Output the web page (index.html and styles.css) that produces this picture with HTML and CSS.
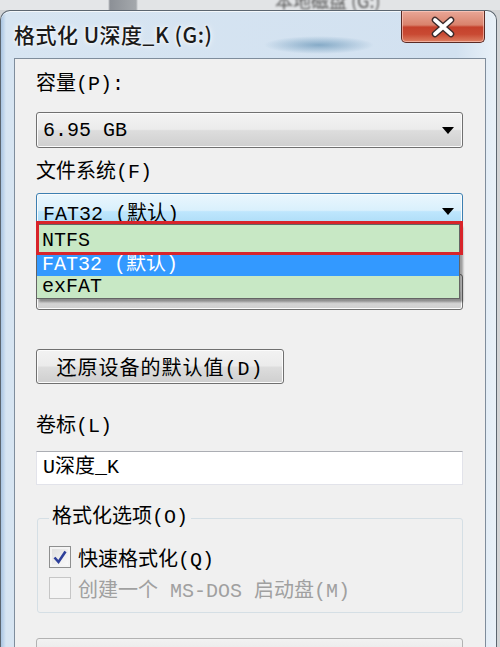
FILE: index.html
```html
<!DOCTYPE html>
<html lang="zh-CN">
<head>
    <meta charset="UTF-8">
    <title>格式化 U深度_K (G:)</title>
    <link rel="stylesheet" href="styles.css">
</head>
<body>

    <div class="desk"><span>本地磁盘 (G:)</span></div>

    <div class="window">
        <div class="titlebar">
            <h1>格式化 U深度_K (G:)</h1>
            <button class="close" aria-label="关闭">
                <svg width="28" height="22" viewBox="0 0 28 22">
                    <path d="M6 4 L22 18 M22 4 L6 18" stroke="#3a2a2a" stroke-width="6.5" stroke-linecap="round"/>
                    <path d="M6 4 L22 18 M22 4 L6 18" stroke="#fff" stroke-width="3.8" stroke-linecap="round"/>
                </svg>
            </button>
        </div>

        <div class="client">
            <p class="label">容量(P):</p>
            <div class="combo">
                <span>6.95 GB</span>
                <i class="arrow"></i>
            </div>

            <p class="label label-fs">文件系统(F)</p>
            <div class="combo-wrap">
                <div class="combo combo-open">
                    <span>FAT32 (默认)</span>
                    <i class="arrow"></i>
                </div>
                <ul class="dropdown">
                    <li class="row-first">NTFS</li>
                    <li class="selected">FAT32 (默认)</li>
                    <li>exFAT</li>
                </ul>
                <div class="mark"></div>
            </div>

            <!-- covered by the open list -->
            <p class="label label-unit covered">分配单元大小(A)</p>
            <div class="combo combo-unit">
                <span class="covered">4096 字节</span>
                <i class="arrow covered"></i>
            </div>

            <button class="btn">还原设备的默认值(D)</button>

            <p class="label label-vol">卷标(L)</p>
            <div class="textbox">U深度_K</div>

            <fieldset class="group">
                <legend>格式化选项(O)</legend>
                <label class="check">
                    <span class="box checked">
                        <svg width="16" height="16" viewBox="0 0 16 16">
                            <path d="M2.5 8.5 L6.5 13 L13.5 2.5" fill="none" stroke="#2d3f9a" stroke-width="2.6"/>
                        </svg>
                    </span>
                    快速格式化(Q)
                </label>
                <label class="check disabled">
                    <span class="box"></span>
                    创建一个 MS-DOS 启动盘(M)
                </label>
            </fieldset>

            <div class="progress"></div>
        </div>
    </div>

</body>
</html>
```

FILE: styles.css
```css
* {
    margin: 0;
    padding: 0;
    box-sizing: border-box;
}

body {
    width: 500px;
    height: 647px;
    overflow: hidden;
    background: #d2d4d6;
    font-family: 'Liberation Mono', 'Noto Sans CJK SC', monospace;
    font-size: 20px;
    color: #000;
}

.desk {
    height: 10px;
    overflow: hidden;
    background: linear-gradient(90deg, #e4e6e8 0, #e4e6e8 108px, #8c9096 110px, #a4a8ac 136px, #e2e4e6 138px);
}

.desk span {
    display: block;
    margin: -13px 0 0 275px;
    font-family: 'Noto Sans CJK SC', sans-serif;
    font-size: 18px;
    color: #555;
    filter: blur(1px);
}

.window {
    width: 497px;
    height: 637px;
    display: flex;
    flex-direction: column;
    padding: 0 10px 0 13px;
    border: 1px solid #5c6670;
    border-bottom: none;
    border-radius: 10px 10px 0 0;
    background:
        radial-gradient(ellipse 55px 9px at 318px 34px, rgba(70, 125, 165, 0.55), transparent),
        linear-gradient(90deg, #a8c4e2 0, #d7e5f2 5px, #d2e1f0 92%, #e9f1f8 100%);
    box-shadow: inset 0 1px 0 #f4f8fb;
}

.titlebar {
    height: 47px;
    display: flex;
    align-items: flex-start;
    justify-content: space-between;
    flex-shrink: 0;
}

.titlebar h1 {
    margin-top: 8px;
    font-family: 'Noto Sans CJK SC', sans-serif;
    font-size: 21px;
    font-weight: 500;
    letter-spacing: 0.5px;
    color: #1a1a1a;
    text-shadow: 0 0 6px #fff, 0 0 3px #fff;
}

.close {
    width: 84px;
    height: 32px;
    margin-right: 1px;
    border: 1px solid #5a2a24;
    border-top: none;
    border-radius: 0 0 5px 5px;
    background: linear-gradient(#e9a797 0, #d9826c 45%, #c5412c 52%, #c94a33 75%, #dd8063 100%);
    box-shadow: inset 0 0 0 1px rgba(255, 210, 200, 0.6);
    display: flex;
    align-items: center;
    justify-content: center;
}

.client {
    flex: 1;
    background: #f0f0f0;
    border: 1px solid #7f8d9c;
    padding: 0 22px 0 21px;
}

.label {
    height: 22px;
    line-height: 22px;
    margin-top: 15px;
}

.label-fs {
    margin-top: 14px;
}

.label-unit {
    margin-top: 11px;
}

.label-vol {
    margin-top: 32px;
}

.covered {
    visibility: hidden;
}

.combo {
    height: 36px;
    margin-top: 16px;
    padding: 0 8px 0 6px;
    display: flex;
    align-items: center;
    border: 1px solid #707070;
    border-radius: 3px;
    background: linear-gradient(#f3f3f3 0, #ebebeb 48%, #dddddd 52%, #cfcfcf 100%);
    box-shadow: inset 0 0 0 1px #fbfbfb;
}

.combo .arrow {
    margin-left: auto;
    width: 0;
    height: 0;
    border-left: 6px solid transparent;
    border-right: 6px solid transparent;
    border-top: 7px solid #000;
}

.combo-wrap {
    position: relative;
    margin-top: 9px;
}

.combo-open {
    margin-top: 0;
    border-color: #3c7fb1;
    background: linear-gradient(#eaf6fd 0, #d9f0fc 48%, #bee6fd 52%, #a7d9f5 100%);
}

.combo-unit {
    margin-top: 12px;
}

.dropdown {
    position: absolute;
    top: 31px;
    left: 0;
    width: 424px;
    list-style: none;
    background: #c8e8c5;
    border: 1px solid #646464;
    box-shadow: 3px 3px 2px rgba(0, 0, 0, 0.35);
}

.dropdown li {
    height: 22px;
    line-height: 22px;
    padding-left: 5px;
}

.dropdown .row-first {
    height: 29px;
    line-height: 27px;
    padding-top: 2px;
}

.dropdown .selected {
    background: #3399ff;
    color: #fff;
}

.mark {
    position: absolute;
    top: 28px;
    left: 0;
    width: 427px;
    height: 34px;
    border: 3px solid #d8242a;
}

.btn {
    display: block;
    width: 248px;
    height: 35px;
    margin-top: 39px;
    font: inherit;
    letter-spacing: 1px;
    color: #000;
    border: 1px solid #707070;
    border-radius: 3px;
    background: linear-gradient(#f2f2f2 0, #ebebeb 48%, #dddddd 52%, #cfcfcf 100%);
    box-shadow: inset 0 0 0 1px #fcfcfc;
}

.textbox {
    height: 34px;
    margin-top: 13px;
    padding-left: 6px;
    line-height: 32px;
    background: #fff;
    border: 1px solid #e2e3ea;
    border-top-color: #abadb3;
}

.group {
    margin: 22px 0 0 1px;
    height: 106px;
    padding: 0 11px;
    border: 1px solid #d5dfe5;
    border-radius: 3px;
}

.group legend {
    padding: 0 3px;
    line-height: 22px;
}

.check {
    display: flex;
    align-items: center;
    gap: 7px;
    height: 22px;
    margin-top: 17px;
}

.check + .check {
    margin-top: 9px;
}

.box {
    width: 22px;
    height: 22px;
    border: 1px solid #8e8f8f;
    background: linear-gradient(135deg, #dcdcdc, #fdfdfd);
    box-shadow: inset 0 0 0 2px #f4f4f4;
    display: flex;
    align-items: center;
    justify-content: center;
}

.disabled {
    color: #a0a0a0;
}

.disabled .box {
    border-color: #c6c6c6;
    background: #f4f4f4;
}

.progress {
    height: 26px;
    margin-top: 25px;
    border: 1px solid #b2b2b2;
    border-radius: 3px;
    background: linear-gradient(#f2f2f2, #e2e2e2);
}
```
